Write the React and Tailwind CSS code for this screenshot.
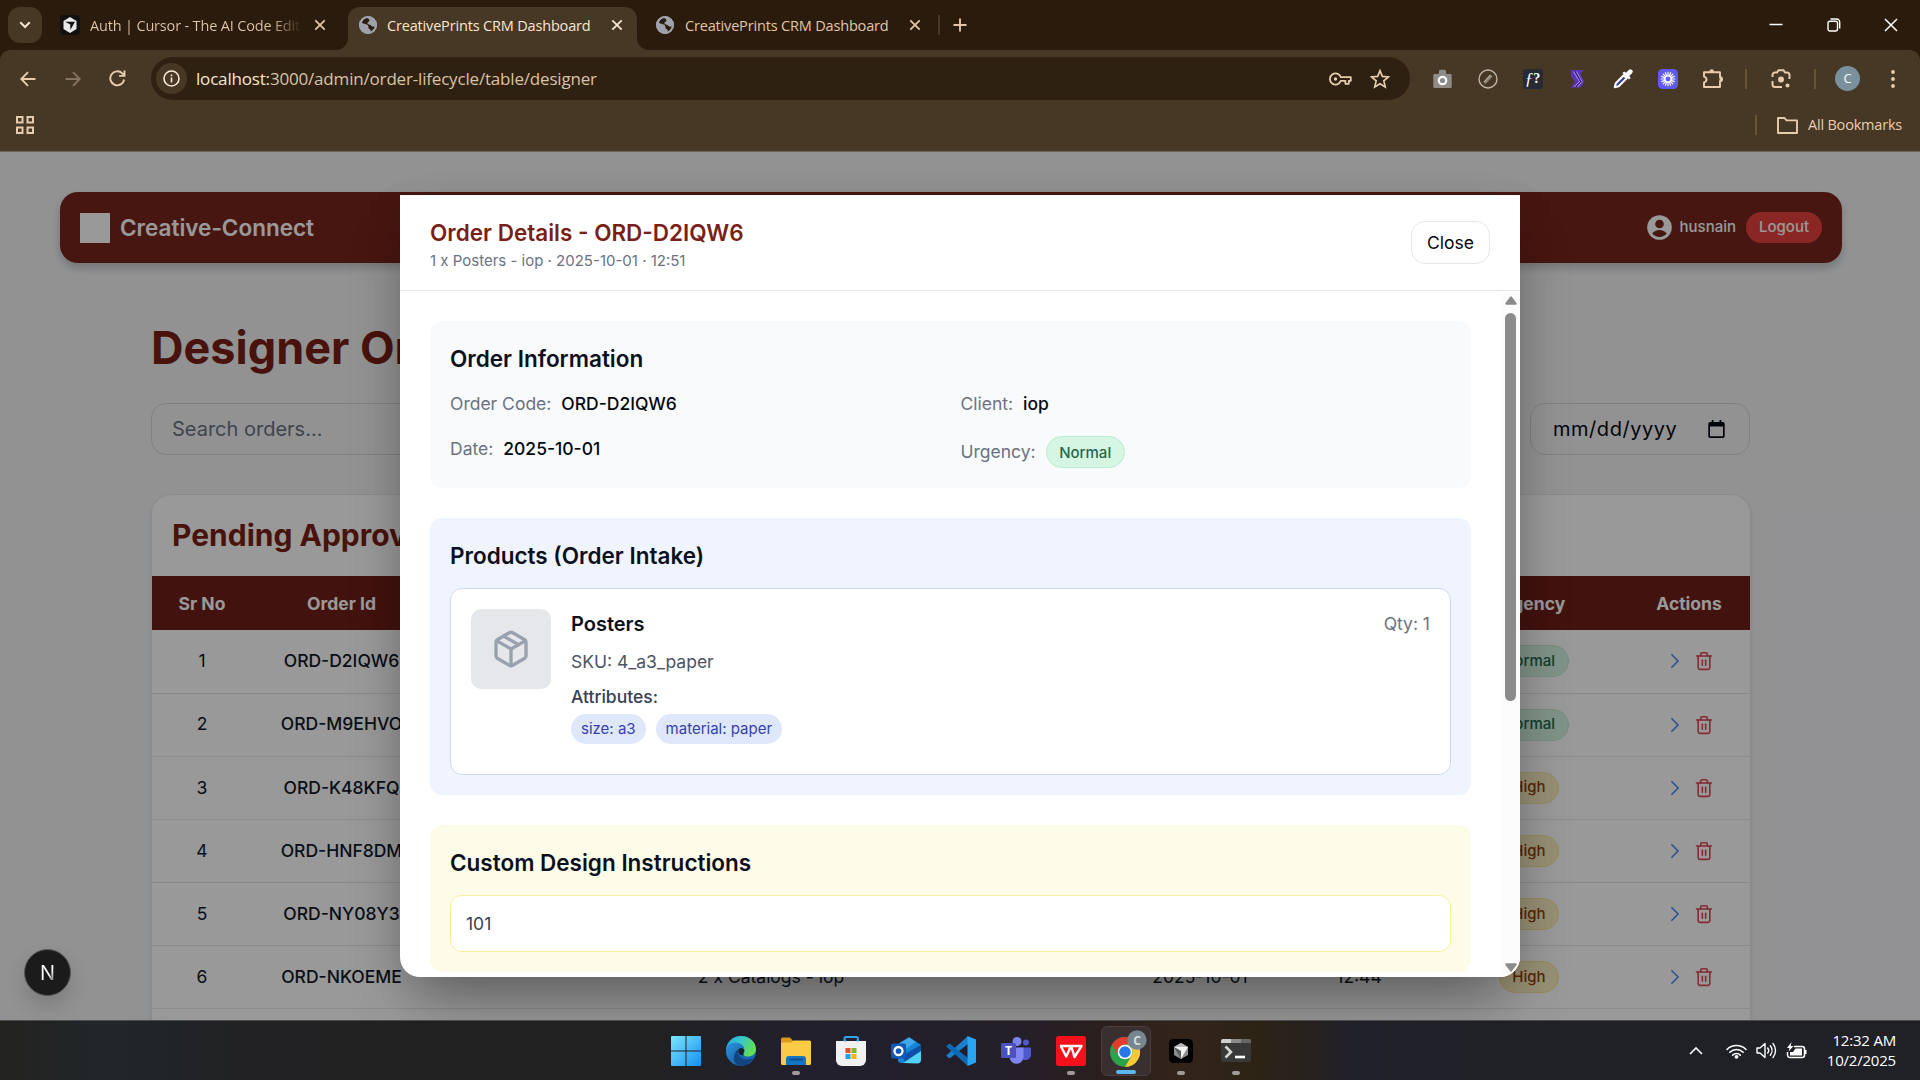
import React from "react";
import { Package, Trash2 } from "lucide-react";

const ROWS = [
  { id: "ORD-D2IQW6", product: "1 x Posters - iop", time: "12:51", urgency: "Normal" },
  { id: "ORD-M9EHVO", product: "1 x Posters - iop", time: "12:50", urgency: "Normal" },
  { id: "ORD-K48KFQ", product: "1 x Posters - iop", time: "12:49", urgency: "High" },
  { id: "ORD-HNF8DM", product: "1 x Posters - iop", time: "12:48", urgency: "High" },
  { id: "ORD-NY08Y3", product: "1 x Posters - iop", time: "12:46", urgency: "High" },
  { id: "ORD-NKOEME", product: "2 x Catalogs - iop", time: "12:44", urgency: "High" },
];

/* ---------- Browser chrome ---------- */

function Globe() {
  return (
    <svg width="18" height="18" viewBox="0 0 18 18" className="shrink-0">
      <circle cx="9" cy="9" r="9" fill="#9fa1ab" />
      <path d="M3 6.6C4.6 8.8 7.6 7.6 9 9.4c1 1.3-.2 2.6 1 3.3 1.4.6 2.2 1 1.4 3.4C14 15 15.600 12.600 15.700 10c-1.500 1.200-2.800.9-3.700-.4-.9-1.400-3.300-.6-3.500-2.300C8.400 5.700 10.700 5.900 10.400 4 10.200 2.900 8.800 2.300 8 1.700 5.600 2.200 3.700 4 3 6.600z" fill="#2b1d0e" />
      <circle cx="9" cy="9" r="8" fill="none" stroke="#9fa1ab" strokeWidth="2" />
    </svg>
  );
}

function CursorCube() {
  return (
    <svg width="20" height="20" viewBox="0 0 20 20" className="shrink-0">
      <rect width="20" height="20" rx="4" fill="#111" />
      <path d="M10 2l6.500 4v8L10 18l-6.500-4V6z" fill="#e9e9e9" />
      <path d="M5 6.800h10L10.300 15V9.500z" fill="#111" />
    </svg>
  );
}

function TabClose({ color }) {
  return (
    <svg width="12" height="12" viewBox="0 0 12 12" fill="none" stroke={color} strokeWidth="1.800" className="shrink-0">
      <path d="M1.300 1.300l9.400 9.400M10.700 1.300l-9.400 9.400" />
    </svg>
  );
}

function TabStrip() {
  return (
    <div className="flex h-[50px] items-end bg-[#2a1b0d]">
      <div className="mb-[7px] ml-2 flex h-[36px] w-[34px] items-center justify-center rounded-[12px] bg-[#473725]">
        <svg width="12" height="8" viewBox="0 0 12 8" fill="none" stroke="#f6e4cf" strokeWidth="2"><path d="M1.300 1.300L6 6l4.700-4.700" /></svg>
      </div>
      <div className="mb-[7px] ml-[18px] flex h-[36px] w-[270px] items-center">
        <CursorCube />
        <span className="ml-[10px] w-[212px] overflow-hidden whitespace-nowrap bg-gradient-to-r from-[#e0c6a6] from-85% to-transparent bg-clip-text pt-[1px] text-[14.5px] tracking-[-0.170px] text-transparent">
          Auth | Cursor - The AI Code Editor
        </span>
        <span className="ml-[12px] flex"><TabClose color="#e0c6a6" /></span>
      </div>
      <div className="relative ml-[18px] flex h-[43px] w-[289px] items-center rounded-t-[12px] bg-[#473725] pb-[7px] pl-[11px]">
        <svg className="absolute -left-[12px] bottom-0" width="12" height="12"><path d="M12 0v12H0A12 12 0 0 0 12 0z" fill="#473725" /></svg>
        <svg className="absolute -right-[12px] bottom-0" width="12" height="12"><path d="M0 0v12h12A12 12 0 0 1 0 0z" fill="#473725" /></svg>
        <Globe />
        <span className="ml-[10px] w-[212px] whitespace-nowrap pt-[1px] text-[14.5px] tracking-[-0.170px] text-[#f8e6d0]">CreativePrints CRM Dashboard</span>
        <span className="ml-[12px] flex"><TabClose color="#f8e6d0" /></span>
      </div>
      <div className="mb-[7px] ml-[19px] flex h-[36px] items-center">
        <Globe />
        <span className="ml-[11px] w-[212px] whitespace-nowrap pt-[1px] text-[14.5px] tracking-[-0.170px] text-[#e0c6a6]">CreativePrints CRM Dashboard</span>
        <span className="ml-[12px] flex"><TabClose color="#e0c6a6" /></span>
        <span className="ml-[17px] h-[20px] w-[2px] bg-[#473725]" />
        <svg className="ml-[13px]" width="14" height="14" viewBox="0 0 14 14" stroke="#e0c6a6" strokeWidth="1.900"><path d="M7 .5v13M.5 7h13" /></svg>
      </div>
      <div className="mb-[14px] ml-auto flex h-[22px] items-center pr-[22px] text-white">
        <svg width="14" height="14" viewBox="0 0 14 14" stroke="currentColor" strokeWidth="1.500"><path d="M.5 6.500h13" /></svg>
        <svg className="ml-[44px]" width="14" height="14" viewBox="0 0 14 14" fill="none" stroke="currentColor" strokeWidth="1.400"><rect x="1" y="3.200" width="9.500" height="9.800" rx="2" /><path d="M3.500 1h6.200a3 3 0 0 1 3 3v6.500" /></svg>
        <svg className="ml-[43px]" width="14" height="14" viewBox="0 0 14 14" stroke="currentColor" strokeWidth="1.500"><path d="M1 1l12 12M13 1L1 13" /></svg>
      </div>
    </div>
  );
}

function ToolSlot({ children, className = "" }) {
  return <div className={"flex w-[45px] shrink-0 items-center justify-center " + className}>{children}</div>;
}

function Toolbar() {
  return (
    <div className="bg-[#2a1b0d]">
      <div className="h-[102px] rounded-t-[10px] border-b border-[#6b6459] bg-[#473725] pt-[7px]">
        <div className="flex h-[43px] items-center text-[#e6cdb0]">
          <ToolSlot className="ml-[5px]">
            <svg width="16" height="16" viewBox="0 0 16 16" fill="none" stroke="currentColor" strokeWidth="1.900"><path d="M15.500 8H1.500M8 1.200L1.300 8 8 14.800" /></svg>
          </ToolSlot>
          <ToolSlot className="text-[#86745f]">
            <svg width="16" height="16" viewBox="0 0 16 16" fill="none" stroke="currentColor" strokeWidth="1.900"><path d="M.5 8h14M8 1.200L14.700 8 8 14.800" /></svg>
          </ToolSlot>
          <ToolSlot>
            <svg width="17" height="17" viewBox="0 0 17 17" fill="none" stroke="currentColor" strokeWidth="1.900"><path d="M15.200 9.500A7 7 0 1 1 13.300 3.400L15.500 5.600M15.500.5v5.400h-5.400" /></svg>
          </ToolSlot>
          <div className="ml-[11px] flex h-[43px] w-[1259px] items-center rounded-full bg-[#2f2112] pl-[5px] pr-[19px]">
            <div className="flex h-[31px] w-[31px] items-center justify-center rounded-full bg-[#473725]">
              <svg width="17" height="17" viewBox="0 0 17 17" fill="none" stroke="#fbe9d5" strokeWidth="1.600"><circle cx="8.500" cy="8.500" r="7.500" /><path d="M8.500 7.500v5M8.500 4.500v1.700" /></svg>
            </div>
            <span className="ml-[9px] pt-[1px] text-[17px] tracking-[-0.180px] text-[#d9c2a6]"><span className="text-[#f8e6d0]">localhost:</span>3000/admin/order-lifecycle/table/designer</span>
            <svg className="ml-auto" width="23" height="14" viewBox="0 0 23 14" fill="none" stroke="currentColor" strokeWidth="1.800"><path d="M11.800 5.200h10v3.600h-2v3h-3.400v-3h-4.600A5.600 5.600 0 1 1 11.800 5.200z" strokeLinejoin="round" /><circle cx="6.500" cy="7" r="1.700" fill="currentColor" stroke="none" /></svg>
            <svg className="ml-[18px] mr-[1px]" width="20" height="20" viewBox="0 0 24 24" fill="none" stroke="currentColor" strokeWidth="2"><path d="M12 2l2.800 6.900 7.400.6-5.600 4.800 1.700 7.300L12 17.700l-6.300 3.900 1.700-7.300L1.800 9.500l7.400-.6z" /></svg>
          </div>
          <ToolSlot className="ml-[10px]">
            <svg width="19" height="20" viewBox="0 0 19 20"><path d="M1.500 5h4.200l.3-2.800A1.500 1.500 0 0 1 7.500.8h4A1.500 1.500 0 0 1 13 2.200l.3 2.800h4.200a1.200 1.200 0 0 1 1.200 1.200v11.600a1.200 1.200 0 0 1-1.200 1.200h-16A1.200 1.200 0 0 1 .3 17.800V6.200A1.200 1.200 0 0 1 1.500 5z" fill="#8f8c88" /><circle cx="9.500" cy="11.500" r="4.800" fill="#fff" /><circle cx="9.500" cy="11.500" r="2.600" fill="#8b8b8b" /></svg>
          </ToolSlot>
          <ToolSlot>
            <svg width="20" height="20" viewBox="0 0 20 20" fill="none" stroke="#c0b5a6"><circle cx="10" cy="10" r="9" strokeWidth="1.400" /><path d="M6.500 14L13.500 6.500" strokeWidth="3" stroke="#8f8779" /><path d="M6 13l6-7" strokeWidth="1" /></svg>
          </ToolSlot>
          <ToolSlot>
            <div className="flex h-[20px] w-[20px] items-center justify-center rounded-[3px] bg-[#252a33] font-['Liberation_Serif',serif] text-[17px] italic leading-none text-white">ƒ<span className="text-[14px] font-bold not-italic">?</span></div>
          </ToolSlot>
          <ToolSlot>
            <svg width="17" height="20" viewBox="0 0 17 20"><path d="M2 1h13l-4 4 4.500 7.500-4 6H1.500L6 13 2 7z" fill="#5a35b8" /><path d="M4.500 2.500L10.500 12.500 5 18M7.500 2.500L13 12.500 8.500 18" stroke="#a890e8" strokeWidth="1" fill="none" /><path d="M6 2.500L11.800 12.500 7 18" stroke="#2b1866" strokeWidth=".9" fill="none" /></svg>
          </ToolSlot>
          <ToolSlot>
            <svg width="20" height="20" viewBox="0 0 20 20"><path d="M9.500 4l1.600-1.600 1.900 1.300L15.800 1A2.200 2.200 0 0 1 19 4.200L16.300 7l1.300 1.900L16 10.500z" fill="#fff" /><path d="M10.700 6.300L2.800 14.300 1.700 18.300l4-1.100L13.700 9.300z" fill="#3a3d98" stroke="#fff" strokeWidth="2" strokeLinejoin="round" /></svg>
          </ToolSlot>
          <ToolSlot>
            <svg width="20" height="20" viewBox="0 0 20 20"><rect width="20" height="20" rx="4.500" fill="#5f5af0" /><g stroke="#fff" strokeWidth="1.200" strokeLinecap="round"><path d="M10 3.200v4M10 12.800v4M3.200 10h4M12.800 10h4M5.200 5.200L8 8M12 12l2.800 2.800M14.800 5.200L12 8M8 12l-2.800 2.800M7.400 3.700l1.500 3.700M11.100 12.600l1.500 3.700M12.600 3.700l-1.500 3.700M8.900 12.600l-1.500 3.700M3.700 7.400l3.700 1.500M12.600 11.100l3.700 1.500M3.700 12.600l3.700-1.500M12.600 8.900l3.700-1.500" /><circle cx="10" cy="10" r="3" fill="#5f5af0" /></g></svg>
          </ToolSlot>
          <ToolSlot className="pl-[1px]">
            <svg width="22" height="21" viewBox="0 0 22 21" fill="none" stroke="currentColor" strokeWidth="1.900" strokeLinejoin="round"><path d="M2 4.200h16v5c2.600 0 2.600 4 0 4V19H2v-4.600c3.300-.6 3.300-5.200 0-5.800z" /><path d="M7.300 3.800a2.400 2.600 0 0 1 4.800 0z" fill="currentColor" stroke="none" /><path d="M18.500 9.200a2.200 2.200 0 0 1 0 4z" fill="currentColor" /></svg>
          </ToolSlot>
          <span className="ml-[10px] h-[20px] w-[2px] bg-[#6b5338]" />
          <svg className="ml-[24px]" width="20" height="20" viewBox="0 0 20 20" fill="none" stroke="currentColor" strokeWidth="2"><path d="M1.500 8V6a2.500 2.500 0 0 1 2.500-2.500h2L7.500 1.300h5L14 3.500h2A2.500 2.500 0 0 1 18.500 6v4M1.500 12v3.500A2.500 2.500 0 0 0 4 18h7" /><circle cx="10" cy="10.500" r="3" fill="currentColor" stroke="none" /><circle cx="16.500" cy="16.500" r="2" fill="currentColor" stroke="none" /></svg>
          <span className="ml-[23px] h-[20px] w-[2px] bg-[#6b5338]" />
          <div className="ml-[19px] flex h-[25px] w-[25px] items-center justify-center rounded-full bg-[#7b909d] text-[13px] text-white">C</div>
          <svg className="ml-[31px]" width="4" height="18" viewBox="0 0 4 18" fill="currentColor"><circle cx="2" cy="2" r="1.900" /><circle cx="2" cy="9" r="1.900" /><circle cx="2" cy="16" r="1.900" /></svg>
        </div>
        <div className="mt-[7px] flex h-[36px] items-center pl-[16px] pr-[18px] text-[#e6cdb0]">
          <svg width="18" height="18" viewBox="0 0 18 18" fill="none" stroke="currentColor" strokeWidth="2"><rect x="1" y="1" width="5.500" height="5.500" /><rect x="11.500" y="1" width="5.500" height="5.500" /><rect x="1" y="11.500" width="5.500" height="5.500" /><rect x="11.500" y="11.500" width="5.500" height="5.500" /></svg>
          <span className="ml-auto h-[20px] w-[2px] bg-[#6b5338]" />
          <svg className="ml-[20px]" width="21" height="17" viewBox="0 0 21 17" fill="none" stroke="currentColor" strokeWidth="1.900" strokeLinejoin="round"><path d="M1 1h6.500l2 2.400H20V16H1z" /></svg>
          <span className="ml-[10px] w-[94px] whitespace-nowrap text-[14.5px] tracking-[-0.200px]">All Bookmarks</span>
        </div>
      </div>
    </div>
  );
}

/* ---------- Page ---------- */

function NavBar() {
  return (
    <div className="ml-[60px] flex h-[71px] w-[1782px] items-center rounded-[18px] bg-[#79261d] px-[20px] text-white shadow-[0_5px_8px_rgba(0,0,0,0.2)]">
      <div className="h-[30px] w-[30px] bg-white" />
      <span className="ml-[10px] text-[22.5px] font-semibold">Creative-Connect</span>
      <svg className="ml-auto" width="25" height="25" viewBox="0 0 25 25"><circle cx="12.500" cy="12.500" r="12.300" fill="#fff" /><circle cx="12.500" cy="9" r="4.300" fill="#79261d" /><path d="M5.200 18.500c1.600-2.300 4.300-3.600 7.300-3.600s5.700 1.300 7.300 3.600a9.500 9.500 0 0 1-14.600 0z" fill="#79261d" /></svg>
      <span className="ml-[8px] text-[15px] font-medium">husnain</span>
      <span className="ml-[10px] flex h-[31px] w-[76px] items-center justify-center rounded-full bg-[#e7403d] text-[15px] font-medium">Logout</span>
    </div>
  );
}

const COLS = "grid grid-cols-[100px_179px_680px_178px_140px_200px_120px] items-center justify-items-center";

function OrdersTable() {
  return (
    <div className="mt-[39px] h-[560px] w-[1600px] overflow-hidden rounded-t-[20px] border border-gray-200 bg-white shadow-md">
      <div className="flex h-[81px] items-center px-[20px] pb-[1px] text-[30px] font-bold text-[#7a1f17]">Pending Approvals</div>
      <div className={COLS + " h-[54.375px] bg-[#6f1e18] pt-[1px] text-[17.5px] font-bold text-white"}>
        <span>Sr No</span><span>Order Id</span><span>Product</span><span>Date</span><span>Time</span><span>Urgency</span><span>Actions</span>
      </div>
      {ROWS.map((r, i) => (
        <div key={r.id} className={COLS + " h-[63.125px] border-b border-gray-200 text-[17.5px] text-gray-900"}>
          <span>{i + 1}</span>
          <span className="font-medium">{r.id}</span>
          <span>{r.product}</span>
          <span>2025-10-01</span>
          <span>{r.time}</span>
          <Badge kind={r.urgency} />
          <span className="flex items-center gap-[9px]">
            <svg width="20" height="20" viewBox="0 0 24 24" fill="none" stroke="#4b86ee" strokeWidth="2" strokeLinecap="round" strokeLinejoin="round"><path d="M8.250 4.500l7.500 7.500-7.500 7.500" /></svg>
            <Trash2 size={20} strokeWidth={1.900} className="text-[#dd4650]" />
          </span>
        </div>
      ))}
    </div>
  );
}

function Badge({ kind }) {
  const tone = kind === "Normal" ? "border-[#bcecd0] bg-[#d5f6e3] text-[#24684a]" : "border-[#fbe596] bg-[#fcf1c4] text-[#92400e]";
  return <span className={"inline-flex h-[32px] items-center rounded-full border px-[12.5px] text-[15px] font-medium " + tone}>{kind}</span>;
}

function Page() {
  return (
    <div className="h-full bg-gray-100 pt-[40px]">
      <NavBar />
      <div className="ml-[151px] mt-[59px] w-[1600px]">
        <h1 className="text-[45px] font-bold leading-[52px] text-[#7a1f17]">Designer Orders</h1>
        <div className="mt-[29px] flex h-[52px] w-[1599px] items-stretch justify-between text-[20px]">
          <div className="flex w-[600px] items-center rounded-[15px] border border-gray-300 px-[20px] text-gray-500">Search orders...</div>
          <div className="flex w-[220px] items-center rounded-[15px] border border-gray-300 pl-[22px] pr-[24px] text-gray-950">
            <span className="tracking-[0.540px]">mm/dd/yyyy</span>
            <svg className="ml-auto" width="17" height="18" viewBox="0 0 17 18" fill="currentColor"><path d="M2 2h1.700V0h1.800v2h6V0h1.800v2H15a1.700 1.700 0 0 1 1.700 1.700v12.500a1.700 1.700 0 0 1-1.700 1.700H2A1.700 1.700 0 0 1 .3 16.200V3.700A1.700 1.700 0 0 1 2 2zm0 4.500v9.700h13V6.500z" fillRule="evenodd" /></svg>
          </div>
        </div>
        <OrdersTable />
      </div>
    </div>
  );
}

/* ---------- Modal ---------- */

function SectionTitle({ children }) {
  return <h3 className="mb-[15px] text-[22.5px] font-semibold leading-[35px] text-[#0b101d]">{children}</h3>;
}

function Field({ label, children }) {
  return (
    <div className="flex items-baseline leading-[25px]">
      <span className="text-gray-500">{label}</span>
      <span className="ml-[10px] font-medium text-gray-950">{children}</span>
    </div>
  );
}

function OrderModal() {
  return (
    <div className="flex h-[782px] w-[1120px] flex-col overflow-hidden rounded-b-[20px] bg-white text-[17.5px] shadow-[0_31px_62px_-15px_rgba(0,0,0,0.38),0_10px_40px_rgba(0,0,0,0.08)]">
      <div className="flex h-[96px] shrink-0 items-center justify-between border-b border-gray-200 pl-[30px] pr-[30px]">
        <div>
          <h2 className="pt-[1px] text-[22.5px] font-semibold leading-[35px] text-[#7a1f17]">Order Details - ORD-D2IQW6</h2>
          <p className="text-[15px] leading-[21px] text-gray-500">1 x Posters - iop · 2025-10-01 · 12:51</p>
        </div>
        <button className="flex h-[43px] w-[79px] items-center justify-center rounded-[14px] border border-gray-200 pt-[1px] text-gray-950">Close</button>
      </div>
      <div className="flex min-h-0 flex-1">
        <div className="flex flex-1 flex-col gap-[30px] overflow-hidden px-[30px] pt-[30px]">
          <section className="shrink-0 rounded-[12px] bg-[#f8fafc] p-[20px]">
            <SectionTitle>Order Information</SectionTitle>
            <div className="grid grid-cols-2 items-start gap-x-[20px] gap-y-[20px]">
              <Field label="Order Code:">ORD-D2IQW6</Field>
              <Field label="Client:">iop</Field>
              <Field label="Date:">2025-10-01</Field>
              <Field label="Urgency:"><span className="flex"><Badge kind="Normal" /></span></Field>
            </div>
          </section>
          <section className="shrink-0 rounded-[12px] bg-[#f0f4fe] p-[20px]">
            <SectionTitle>Products (Order Intake)</SectionTitle>
            <div className="flex h-[187px] items-start rounded-[12px] border border-[#ccd8f5] bg-white p-[20px]">
              <div className="flex h-[80px] w-[80px] items-center justify-center rounded-[10px] bg-[#e5e7eb] text-gray-400">
                <Package size={40} strokeWidth={2} />
              </div>
              <div className="ml-[20px] flex-1">
                <div className="flex items-center justify-between">
                  <span className="text-[20px] font-semibold leading-[30px] text-[#0b101d]">Posters</span>
                  <span className="pt-[1px] text-gray-500">Qty: 1</span>
                </div>
                <p className="mt-[10px] leading-[25px] text-gray-600">SKU: 4_a3_paper</p>
                <p className="mt-[10px] leading-[25px] font-medium text-gray-700">Attributes:</p>
                <div className="mt-[5px] flex gap-[10px] text-[15px] text-[#3640ad]">
                  <span className="flex h-[30px] items-center rounded-full bg-[#dfe8fb] px-[10px]">size: a3</span>
                  <span className="flex h-[30px] items-center rounded-full bg-[#dfe8fb] px-[10px]">material: paper</span>
                </div>
              </div>
            </div>
          </section>
          <section className="shrink-0 rounded-[12px] bg-[#fdfce8] p-[20px]">
            <SectionTitle>Custom Design Instructions</SectionTitle>
            <div className="flex h-[57px] items-center rounded-[12px] border border-[#f8f09c] bg-white px-[15px] pt-[1px] text-gray-700">101</div>
          </section>
        </div>
        <div className="flex w-[19px] flex-col items-center bg-[#fcfcfc] pb-[5px] pt-[5px]">
          <svg width="12" height="9" viewBox="0 0 12 9"><path d="M6 1.300L10.700 7.700H1.300z" fill="#8b8b8b" stroke="#8b8b8b" strokeWidth="2" strokeLinejoin="round" /></svg>
          <div className="mt-[8px] h-[388px] w-[11px] rounded-full bg-[#8b8b8b]" />
          <svg className="mt-auto" width="12" height="9" viewBox="0 0 12 9"><path d="M6 7.700L10.700 1.300H1.300z" fill="#8b8b8b" stroke="#8b8b8b" strokeWidth="2" strokeLinejoin="round" /></svg>
        </div>
      </div>
    </div>
  );
}

/* ---------- Taskbar ---------- */

function Task({ children, mark, active }) {
  return (
    <div className={"relative flex h-[50px] w-[50px] shrink-0 items-center justify-center rounded-[6px] " + (active ? "border border-[#4a3d3c] bg-[#3a2f30]" : "")}>
      {children}
      {mark && <span className={"absolute bottom-[1px] h-[4px] rounded-full " + (active ? "w-[20px] bg-[#5ab8f0]" : "w-[8px] bg-[#a09a98]")} />}
    </div>
  );
}

function Taskbar() {
  return (
    <div className="flex h-[60px] items-center border-t border-[#4b4b4d] bg-[linear-gradient(90deg,#232320_0px,#20262a_110px,#212123_250px,#212121_640px,#221f2e_830px,#241f28_1020px,#2b1f1e_1100px,#33241a_1180px,#2c2315_1260px,#20202a_1360px,#202126_1500px)] pl-[661px]">
      <div className="flex gap-[5px]">
        <Task>
          <svg width="30" height="30" viewBox="0 0 30 30"><defs><linearGradient id="win" x1="0" y1="0" x2="1" y2="1"><stop offset="0" stopColor="#7be6fb" /><stop offset="1" stopColor="#1390f0" /></linearGradient></defs><path d="M1 0h13.500v14.500H0V1a1 1 0 0 1 1-1zM15.500 0H29a1 1 0 0 1 1 1v13.500H15.500zM0 15.500h14.500V30H1a1 1 0 0 1-1-1zM15.500 15.500H30V29a1 1 0 0 1-1 1H15.500z" fill="url(#win)" /></svg>
        </Task>
        <Task>
          <svg width="30" height="30" viewBox="0 0 30 30"><defs><linearGradient id="edgeTop" x1="0" y1="0" x2="1" y2=".4"><stop offset="0" stopColor="#2aa5e8" /><stop offset=".5" stopColor="#36c9c8" /><stop offset="1" stopColor="#63dd55" /></linearGradient><linearGradient id="edgeLow" x1="0" y1="0" x2="1" y2="1"><stop offset="0" stopColor="#2b95e0" /><stop offset="1" stopColor="#114a8b" /></linearGradient></defs><circle cx="15" cy="15" r="15" fill="#1565b3" /><path d="M0 14C.5 6 7 0 15 0c9 0 15 6.500 15 13 0 5-4 7.500-8 7.500-4.500 0-5-2-4-3.500 1.500-2.500 0-6-4-7C8 8.500 1 11 0 14z" fill="url(#edgeTop)" /><path d="M0 15c0-5 4-8.500 9-8.500 5.500 0 9.500 3.500 9.500 7 0-2-5.500-3-7 1.500-1.500 5 3 10.500 9 10.500 3 0 5-1 7-2.500A15 15 0 0 1 0 15z" fill="url(#edgeLow)" /><path d="M13 12.500c-3 4 .5 11 7.500 11 3 0 5.500-.8 6.500-1.500-2.500 5.500-8 8-12 8C6 28.500 6 17 13 12.500z" fill="#12457f" /><path d="M13.500 12.500c2-1 4.500 0 4.700 2 .1 2-1.700 2.500-.7 4.500-4.500 1-6.500-3.500-4-6.500z" fill="#201f28" /></svg>
        </Task>
        <Task mark>
          <svg width="30" height="28" viewBox="0 0 30 28"><path d="M0 2a1.500 1.500 0 0 1 1.500-1.500H9L12 4v5H0z" fill="#d99a1c" /><path d="M0 5.500h10l2.500-2H28.500A1.500 1.500 0 0 1 30 5v21.500A1.500 1.500 0 0 1 28.500 28h-27A1.500 1.500 0 0 1 0 26.500z" fill="#fccb45" /><path d="M5 28v-6a3 3 0 0 1 3-3h14a3 3 0 0 1 3 3v6z" fill="#1475c4" /><path d="M9 22.500h12" stroke="#0d4f8e" strokeWidth="1.800" strokeLinecap="round" /></svg>
        </Task>
        <Task>
          <svg width="30" height="30" viewBox="0 0 30 30"><path d="M8.500 6V2.500A1.500 1.500 0 0 1 10 1h10.500A1.500 1.500 0 0 1 22 2.500V6" stroke="#36a3e6" strokeWidth="2" fill="none" /><path d="M0 5h30v19a6 6 0 0 1-6 6H6a6 6 0 0 1-6-6z" fill="#f1f1f3" /><path d="M9.500 12h5v5h-5z" fill="#e5502a" /><path d="M15.500 12h5v5h-5z" fill="#7ab82c" /><path d="M9.500 18h5v5h-5z" fill="#28a0e8" /><path d="M15.500 18h5v5h-5z" fill="#fbb416" /><path d="M9 5.500V3.500M21.500 5.500V3.500" stroke="#36a3e6" strokeWidth="2" /></svg>
        </Task>
        <Task>
          <svg width="31" height="27" viewBox="0 0 31 27"><path d="M7 7l11-7 12 8v14a4 4 0 0 1-4 4H10a3 3 0 0 1-3-3z" fill="#1583d6" /><path d="M8 6.500L18 .5l7 4.500-13 9z" fill="#3ea6ea" /><path d="M12 18L30 8v8L14 26z" fill="#0f4fa8" /><path d="M12 26L30 14v8.500a4 4 0 0 1-4 4z" fill="#52d3f5" /><rect x="0" y="6.500" width="15" height="15" rx="2" fill="#0f58b5" /><circle cx="7.500" cy="14" r="4" fill="none" stroke="#fff" strokeWidth="2.300" /></svg>
        </Task>
        <Task>
          <svg width="30" height="30" viewBox="0 0 30 30"><path d="M22 8L3.500 22.500.5 20v-.8L22 0z" fill="#1b7fce" /><path d="M22 22L3.500 7.500.5 10v.8L22 30z" fill="#0f6ab4" /><path d="M21.500 0L30 3.500v23L21.500 30z" fill="#2ba4f2" /></svg>
        </Task>
        <Task>
          <svg width="30" height="27" viewBox="0 0 30 27"><circle cx="16" cy="4.500" r="4.500" fill="#7c83ec" /><circle cx="25" cy="5.500" r="3" fill="#5059c9" /><path d="M20 10.500h9a1 1 0 0 1 1 1V18a5.500 5.500 0 0 1-8 4.500z" fill="#5059c9" /><path d="M9 10.500h13.500V19a7 7 0 0 1-14 1.500z" fill="#7f86f0" /><rect y="6" width="15" height="15" rx="1.500" fill="#4a52bf" /><text x="7.500" y="17.800" textAnchor="middle" fontSize="12" fontWeight="700" fill="#fff" fontFamily="Open Sans">T</text></svg>
        </Task>
        <Task mark>
          <svg width="30" height="30" viewBox="0 0 30 30"><rect width="30" height="30" rx="2.500" fill="#f5111c" /><path d="M4 10h8.500M5 10.500l5.200 10L14.500 11M12.500 10h13L18.500 21 15.500 11M18.500 10l-1 0" fill="none" stroke="#fff" strokeWidth="2.400" strokeLinejoin="round" /></svg>
        </Task>
        <Task mark active>
          <svg width="38" height="38" viewBox="0 0 38 38" className="-mt-[4px] ml-[4px]"><g transform="translate(1 7)"><circle cx="15" cy="15" r="15" fill="#2ba24c" /><path d="M2 7.500A15 15 0 0 1 28 7.500H15a7.500 7.500 0 0 0-6.500 11.200z" fill="#e33b2e" /><path d="M28 7.500A15 15 0 0 1 15 30l6.500-11.200A7.500 7.500 0 0 0 15 7.500z" fill="#fcc934" /><circle cx="15" cy="15" r="7.300" fill="#fff" /><circle cx="15" cy="15" r="5.800" fill="#2a78e8" /></g><circle cx="28" cy="10" r="9.700" fill="#75868f" /><text x="28" y="14.500" textAnchor="middle" fontSize="12" fontWeight="700" fill="#d5dde2" fontFamily="Open Sans">C</text></svg>
        </Task>
        <Task mark>
          <svg width="24" height="24" viewBox="0 0 24 24"><rect width="24" height="24" rx="4.500" fill="#000" /><path d="M12 4l7 4v8l-7 4-7-4V8z" fill="#8e8e8e" /><path d="M5 8l7-4 7 4-7 4z" fill="#b8b8b8" /><path d="M5 8h14l-7 12v-8z" fill="#f2f2f2" /><path d="M5 8l7 4v8z" fill="#5d5d5d" /></svg>
        </Task>
        <Task mark>
          <svg width="30" height="23" viewBox="0 0 30 23"><rect width="30" height="23" rx="2" fill="#393939" /><path d="M0 2a2 2 0 0 1 2-2h8v4H0z" fill="#cfcfcf" /><path d="M10 0h10v4H10z" fill="#8a8a8a" /><path d="M20 0h8a2 2 0 0 1 2 2v2H20z" fill="#666" /><path d="M4.500 7.500l5.500 5.500-5.500 5.500" fill="none" stroke="#d6d6d6" strokeWidth="2.600" /><path d="M14 18h10" stroke="#fff" strokeWidth="2.600" /></svg>
        </Task>
      </div>
      <div className="ml-auto flex items-center pr-[24px] text-white">
        <svg width="14" height="8" viewBox="0 0 14 8" fill="none" stroke="currentColor" strokeWidth="1.600"><path d="M1 7l6-6 6 6" /></svg>
        <svg className="ml-[23px]" width="21" height="16" viewBox="0 0 21 16" fill="none" stroke="currentColor" strokeWidth="1.500"><path d="M1 6.500a13.400 13.400 0 0 1 19 0M3.800 9.300a9.500 9.500 0 0 1 13.400 0M6.700 12.100a5.400 5.400 0 0 1 7.600 0" strokeLinecap="round" /><circle cx="10.500" cy="13.800" r="1.900" fill="currentColor" stroke="none" /></svg>
        <svg className="ml-[9px]" width="21" height="17" viewBox="0 0 21 17" fill="none" stroke="currentColor" strokeWidth="1.400" strokeLinecap="round" strokeLinejoin="round"><path d="M1 6h3l5-4.500v14L4 11H1z" /><path d="M11.700 6a4 4 0 0 1 0 5M14.300 3.800a7.500 7.500 0 0 1 0 9.400M17 1.500a11 11 0 0 1 0 14" /></svg>
        <svg className="ml-[9px]" width="21" height="17" viewBox="0 0 21 17"><path d="M8 4.500h8a2.500 2.500 0 0 1 2.500 2.500v6a2.500 2.500 0 0 1-2.500 2.500H4A2.500 2.500 0 0 1 1.500 13v-3" fill="none" stroke="#fff" strokeWidth="1.500" /><path d="M9.500 6.500h6.500v7H4V10h3z" fill="#fff" /><path d="M19 8h1.500v4H19zM5.500 0L1 6h2.500L2.500 9.500 7.500 4H4.700z" fill="#fff" /></svg>
        <div className="ml-[18px] w-[71px] whitespace-nowrap pb-[2px] text-right text-[15px] leading-[20px] tracking-[-0.200px]">
          <div>12:32 AM</div>
          <div>10/2/2025</div>
        </div>
      </div>
    </div>
  );
}

export default function App() {
  return (
    <div className="flex h-[1080px] w-[1920px] flex-col overflow-hidden font-['Open_Sans',sans-serif]">
      <TabStrip />
      <Toolbar />
      <div className="relative h-[868px] overflow-hidden font-['Inter',sans-serif]">
        <Page />
        <div className="absolute inset-0 flex justify-center bg-black/40 pt-[43px]">
          <OrderModal />
        </div>
        <div className="absolute left-[24px] top-[797px] flex h-[47px] w-[47px] items-center justify-center rounded-full border border-[#555] bg-[#1b1b1b] shadow-[0_10px_20px_rgba(0,0,0,0.15)]">
          <span className="bg-gradient-to-br from-white from-60% to-[#444] bg-clip-text text-[20px] leading-none text-transparent">N</span>
        </div>
      </div>
      <Taskbar />
    </div>
  );
}
